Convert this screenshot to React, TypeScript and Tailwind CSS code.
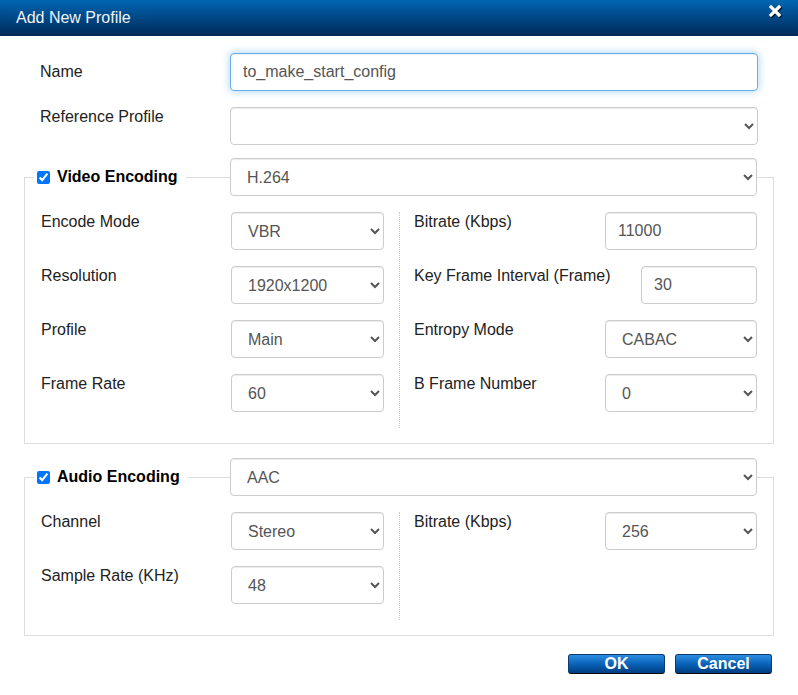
import React from 'react';

const font = "font-['Liberation_Sans',Arial,sans-serif]";

// native select, Chrome draws the arrow
const Select = ({ value, options, className }: { value: string; options?: string[]; className: string }) => (
    <select
        defaultValue={value}
        className={`h-[38px] rounded-[4px] border border-[#ccc] bg-white px-3 text-[16px] text-[#555] shadow-[inset_0_1px_1px_rgba(0,0,0,0.075)] ${className}`}
    >
        {(options || [value]).map((o) => (
            <option key={o} value={o}>{o}</option>
        ))}
    </select>
);

const TextInput = ({ value, className, focused }: { value: string; className: string; focused?: boolean }) => (
    <input
        defaultValue={value}
        className={`h-[38px] rounded-[4px] border bg-white px-3 text-[16px] text-[#555] outline-none ${
            focused
                ? 'border-[#66afe9] shadow-[inset_0_1px_1px_rgba(0,0,0,0.075),0_0_8px_rgba(102,175,233,0.6)]'
                : 'border-[#ccc] shadow-[inset_0_1px_1px_rgba(0,0,0,0.075)]'
        } ${className}`}
    />
);

type Row = { label: string; control: React.ReactNode };

const Column = ({ rows }: { rows: Row[] }) => (
    <div className="flex w-[343px] flex-col">
        {rows.map((r) => (
            <div key={r.label} className="mb-4 flex h-[38px] items-start justify-between">
                <span className="leading-5 text-[#222]">{r.label}</span>
                {r.control}
            </div>
        ))}
    </div>
);

const Section = ({ title, codec, left, right }: { title: string; codec: string; left: Row[]; right: Row[] }) => (
    <div className="w-[750px]">
        {/* legend row: checkbox + title, codec select sits on the top border */}
        <div className="flex h-[38px] items-center">
            <div className="h-[19px] w-[10px] self-end border-l border-t border-[#ddd]" />
            <input type="checkbox" defaultChecked className="ml-[3px] h-[13px] w-[13px] accent-[#0075ff]" />
            <span className="ml-[7px] font-bold text-black">{title}</span>
            <div className="ml-[8px] h-[19px] flex-1 self-end border-t border-[#ddd]" />
            <Select value={codec} className="w-[527px]" />
            <div className="h-[19px] w-[17px] self-end border-r border-t border-[#ddd]" />
        </div>
        <div className="flex border-x border-b border-[#ddd] px-4 pb-[15px] pt-4">
            <Column rows={left} />
            <div className="ml-[15px] border-l border-dotted border-[#ccc]" />
            <div className="ml-[14px]">
                <Column rows={right} />
            </div>
        </div>
    </div>
);

export default function App() {
    return (
        <div className={`h-[695px] w-[798px] overflow-hidden bg-white text-[16px] ${font}`}>
            <div className="relative flex h-9 items-center bg-gradient-to-b from-[#0066b3] to-[#002a5a] pl-4">
                <span className="text-[#f2f2f2]">Add New Profile</span>
                <svg className="absolute right-[15px] top-[5px]" width="14" height="13" viewBox="0 0 14 13">
                    <path d="M3 3 L11 11 M11 3 L3 11" stroke="#000" strokeWidth="3.2" strokeLinecap="square" opacity="0.85" />
                    <path d="M2 2 L10 10 M10 2 L2 10" stroke="#fff" strokeWidth="3.2" strokeLinecap="square" />
                </svg>
            </div>

            <div className="px-6">
                <div className="mt-[17px] flex items-center">
                    <span className="w-[206px] pl-4 text-[#222]">Name</span>
                    <TextInput value="to_make_start_config" focused className="w-[528px]" />
                </div>
                <div className="mt-4 flex items-start">
                    <span className="w-[206px] pl-4 leading-5 text-[#222]">Reference Profile</span>
                    <Select value="" className="w-[528px]" />
                </div>

                <div className="mt-[13px]">
                    <Section
                        title="Video Encoding"
                        codec="H.264"
                        left={[
                            { label: 'Encode Mode', control: <Select value="VBR" className="w-[153px]" /> },
                            { label: 'Resolution', control: <Select value="1920x1200" className="w-[153px]" /> },
                            { label: 'Profile', control: <Select value="Main" className="w-[153px]" /> },
                            { label: 'Frame Rate', control: <Select value="60" className="w-[153px]" /> },
                        ]}
                        right={[
                            { label: 'Bitrate (Kbps)', control: <TextInput value="11000" className="w-[152px]" /> },
                            { label: 'Key Frame Interval (Frame)', control: <TextInput value="30" className="w-[116px]" /> },
                            { label: 'Entropy Mode', control: <Select value="CABAC" className="w-[152px]" /> },
                            { label: 'B Frame Number', control: <Select value="0" className="w-[152px]" /> },
                        ]}
                    />
                </div>

                <div className="mt-[14px]">
                    <Section
                        title="Audio Encoding"
                        codec="AAC"
                        left={[
                            { label: 'Channel', control: <Select value="Stereo" className="w-[153px]" /> },
                            { label: 'Sample Rate (KHz)', control: <Select value="48" className="w-[153px]" /> },
                        ]}
                        right={[
                            { label: 'Bitrate (Kbps)', control: <Select value="256" className="w-[152px]" /> },
                        ]}
                    />
                </div>

                <div className="mt-[18px] flex justify-end gap-[10px] pr-[2px]">
                    <button className="h-5 w-[97px] rounded-[3px] border border-[#0a3a70] border-b-[#0a0a0a] bg-gradient-to-b from-[#2a8ee0] via-[#0a63b8] to-[#003d80] pb-px font-bold leading-none text-white">
                        OK
                    </button>
                    <button className="h-5 w-[97px] rounded-[3px] border border-[#0a3a70] border-b-[#0a0a0a] bg-gradient-to-b from-[#2a8ee0] via-[#0a63b8] to-[#003d80] pb-px font-bold leading-none text-white">
                        Cancel
                    </button>
                </div>
            </div>
        </div>
    );
}
